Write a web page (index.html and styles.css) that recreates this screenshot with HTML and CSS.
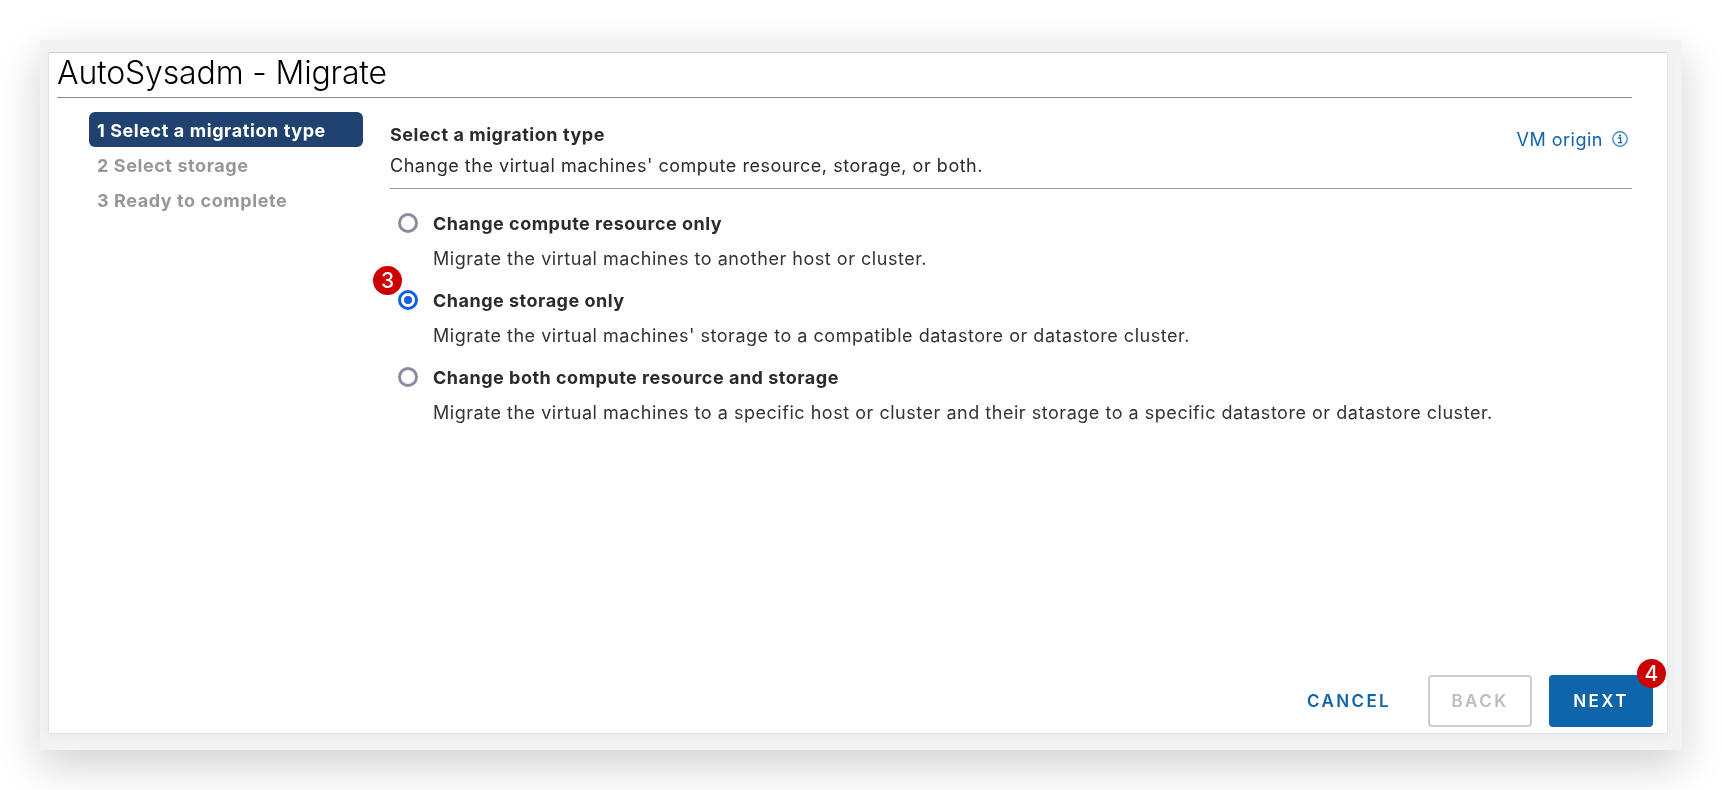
FILE: index.html
```html
<!doctype html>
<html>
	<head>
		<meta charset="utf-8">
		<title>AutoSysadm - Migrate</title>
		<link rel="stylesheet" href="styles.css">
	</head>
	<body>
		<div class="frame">
			<div class="dialog">
				<h1 class="dialog-title">AutoSysadm - Migrate</h1>
				<div class="dialog-body">
					<ul class="steps">
						<li class="step current">1 Select a migration type</li>
						<li class="step">2 Select storage</li>
						<li class="step">3 Ready to complete</li>
					</ul>
					<div class="content">
						<div class="content-head">
							<div>
								<h2 class="content-title">Select a migration type</h2>
								<p class="content-sub">Change the virtual machines' compute resource, storage, or both.</p>
							</div>
							<a class="origin">VM origin
								<svg class="info-icon" width="16" height="16" viewBox="0 0 16 16">
									<circle cx="8" cy="8" r="7.2" fill="none" stroke="#3f8fca" stroke-width="1.4"/>
									<circle cx="8" cy="4.6" r="1.1" fill="#0f65aa"/>
									<path d="M6.2 7h2.4v4.6M5.9 11.7h4.4" fill="none" stroke="#0f65aa" stroke-width="1.3"/>
								</svg>
							</a>
						</div>
						<div class="option">
							<span class="radio"></span>
							<span class="option-label">Change compute resource only</span>
							<span class="option-desc">Migrate the virtual machines to another host or cluster.</span>
						</div>
						<div class="option">
							<span class="radio checked"><span class="badge badge-three">3</span></span>
							<span class="option-label">Change storage only</span>
							<span class="option-desc">Migrate the virtual machines' storage to a compatible datastore or datastore cluster.</span>
						</div>
						<div class="option">
							<span class="radio"></span>
							<span class="option-label">Change both compute resource and storage</span>
							<span class="option-desc">Migrate the virtual machines to a specific host or cluster and their storage to a specific datastore or datastore cluster.</span>
						</div>
					</div>
				</div>
				<div class="dialog-foot">
					<button class="btn btn-link">CANCEL</button>
					<button class="btn btn-back">BACK</button>
					<button class="btn btn-next">NEXT<span class="badge badge-four">4</span></button>
				</div>
			</div>
		</div>
	</body>
</html>
```

FILE: styles.css
```css
* {
	margin: 0;
	padding: 0;
	box-sizing: border-box;
}
html, body {
	height: 100%;
	background: #fff;
	overflow: hidden;
}
body {
	padding: 40px;
	font-family: Inter, "Liberation Sans", sans-serif;
	color: #2b2b2b;
}
ul {
	list-style-type: none;
}
.frame {
	width: 1642px;
	height: 710px;
	padding: 12px 14px 16px 8px;
	background: #f3f3f3;
	box-shadow: 0 16px 40px rgba(0, 0, 0, 0.18);
}
.dialog {
	display: flex;
	flex-direction: column;
	height: 100%;
	padding: 0 35px 6px 8px;
	background: #fff;
	border: 1px solid #e2e2e2;
	border-top-color: #cfcfcf;
	border-radius: 2px;
	box-shadow: 0 2px 10px rgba(0, 0, 0, 0.05);
	filter: blur(0.35px);
}
.dialog-title {
	height: 45px;
	font-size: 32px;
	line-height: 40px;
	font-weight: 300;
	letter-spacing: -0.15px;
	color: #000;
	border-bottom: 1px solid #8c8c8c;
}
.dialog-body {
	flex: 1;
	display: flex;
	padding-top: 14px;
}
.steps {
	width: 274px;
	margin-left: 32px;
}
.step {
	height: 35px;
	line-height: 35px;
	padding: 1px 0 0 8px;
	font-size: 18px;
	font-weight: 700;
	letter-spacing: 0.58px;
	color: #979797;
}
.step.current {
	color: #fff;
	background: #1f4270;
	border-radius: 6px;
}
.content {
	flex: 1;
	margin-left: 27px;
}
.content-head {
	display: flex;
	justify-content: space-between;
	height: 77px;
	padding-top: 11px;
	margin-bottom: 16px;
	border-bottom: 1px solid #9a9a9a;
}
.content-title {
	font-size: 18px;
	line-height: 24px;
	font-weight: 700;
	letter-spacing: 0.55px;
}
.content-sub {
	margin-top: 7px;
	font-size: 18px;
	line-height: 24px;
	letter-spacing: 0.53px;
}
.origin {
	display: flex;
	align-items: center;
	gap: 9px;
	height: 24px;
	margin-top: 4px;
	padding-right: 4px;
	font-size: 18px;
	letter-spacing: 0.5px;
	color: #0f65aa;
}
.option {
	display: grid;
	grid-template-columns: 43px 1fr;
	grid-template-rows: 36px 34px;
	align-items: center;
	height: 77px;
}
.radio {
	position: relative;
	width: 20px;
	height: 20px;
	margin-left: 8px;
	border: 3px solid #8b8ba0;
	border-radius: 50%;
	background: #fff;
}
.radio.checked {
	border-color: #0f5fe0;
}
.radio.checked::after {
	content: "";
	position: absolute;
	left: 3px;
	top: 3px;
	width: 8px;
	height: 8px;
	border-radius: 50%;
	background: #0f5fe0;
}
.option-label {
	font-size: 18px;
	font-weight: 700;
	letter-spacing: 0.5px;
}
.option-desc {
	grid-column: 2;
	font-size: 18px;
	letter-spacing: 0.525px;
	color: #333;
}
.dialog-foot {
	display: flex;
	justify-content: flex-end;
	align-items: center;
	gap: 17px;
	margin-right: -21px;
}
.btn {
	position: relative;
	width: 104px;
	height: 52px;
	font-family: inherit;
	font-size: 17px;
	font-weight: 600;
	letter-spacing: 2.4px;
	border-radius: 4px;
	background: #fff;
	border: 2px solid transparent;
}
.btn-link {
	color: #0f65aa;
	margin-right: 10px;
}
.btn-back {
	color: #bdbdbd;
	border-color: #cdcdcd;
}
.btn-next {
	color: #fff;
	background: #0f65aa;
	border-color: #0f65aa;
}
.badge {
	position: absolute;
	width: 29px;
	height: 29px;
	line-height: 29px;
	border-radius: 50%;
	text-align: center;
	font-size: 21px;
	font-weight: 500;
	letter-spacing: 0;
	color: #fff;
	background: #cc0000;
}
.badge-three {
	left: -28px;
	top: -27px;
}
.badge-four {
	right: -15px;
	top: -18px;
}
```
